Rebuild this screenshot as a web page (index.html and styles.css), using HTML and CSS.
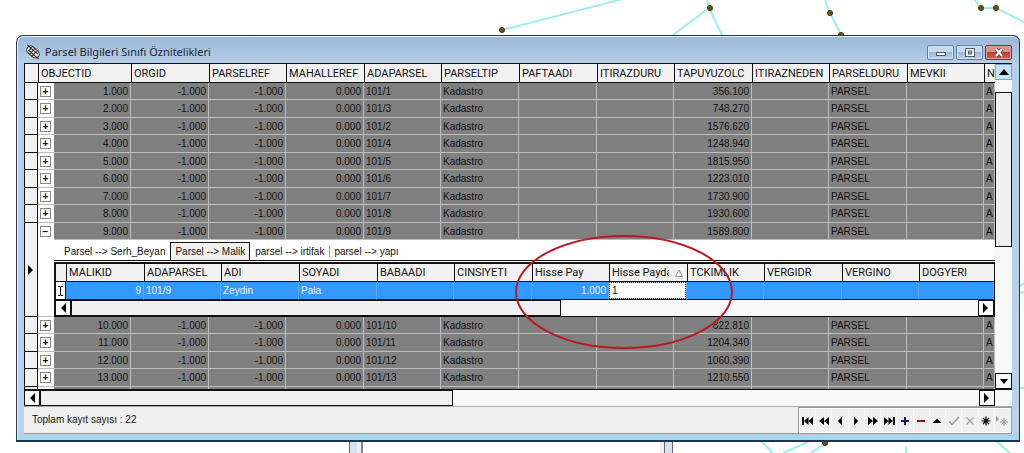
FILE: index.html
```html
<!DOCTYPE html>
<html lang="tr">
<head>
<meta charset="utf-8">
<title>Parsel Bilgileri Sınıfı Öznitelikleri</title>
<link rel="stylesheet" href="styles.css">
</head>
<body>
<svg class="map" width="1024" height="453" viewBox="0 0 1024 453" aria-hidden="true">
  <g fill="none" stroke="#9deeea" stroke-width="2">
    <path d="M502 30 623-1M707 0l2 8-36 27M709 8l13 27M825 0l5 13 11 22M974-1l7 9h15l28 14M761 441l12 12M783 453l25-11M811 453l14-9M906 447v6M996 441l14 12M1020 286l4-3M1020 293l4-1M1020 388h4"/>
  </g>
  <g fill="#74501c" stroke="#3a2a10">
    <circle cx="502" cy="30" r="2.5"/><circle cx="710" cy="8" r="2.5"/><circle cx="830" cy="13" r="2.5"/><circle cx="841" cy="35" r="2.5"/><circle cx="981" cy="8" r="2.5"/><circle cx="996" cy="8" r="2.5"/><circle cx="825" cy="443" r="2.5"/>
  </g>
  <path fill="#d5e3ef" d="M350 440h7v13h-7zM665 440h7v13h-7z"/>
  <path fill="#eee" d="M357 440h4v13h-4zM660 440h4v13h-4z"/>
  <path stroke="#667" d="M349.500 440v13M664.500 440v13M672.500 440v13"/>
  <path stroke="#888" stroke-width="2" d="M362 440v13"/>
</svg>

<main class="window">
  <header class="titlebar">
    <svg class="app-icon" width="16" height="16" viewBox="0 0 16 16" aria-hidden="true"><g transform="rotate(42 8 8)"><rect x="1" y="4" width="14" height="8" rx="4" fill="#f4f4f4" stroke="#222"/><path d="M-1 6.500h14M3 9.500h14M4 4v5M7 4v8M10 5v7" fill="none" stroke="#222"/></g></svg>
    <h1>Parsel Bilgileri Sınıfı Öznitelikleri</h1>
    <div class="controls">
      <button class="control" aria-label="Simge durumuna küçült"><svg width="12" height="9" viewBox="0 0 12 9"><rect x="1.500" y="4.500" width="9" height="3" fill="#fff" stroke="#555d70"/></svg></button>
      <button class="control" aria-label="Ekranı kapla"><svg width="12" height="9" viewBox="0 0 12 9"><rect x="1.500" y=".5" width="9" height="8" fill="#fff" stroke="#555d70"/><rect x="4.500" y="3" width="3" height="3" fill="#9db6d3" stroke="#555d70"/></svg></button>
      <button class="control close" aria-label="Kapat"><svg width="12" height="9" viewBox="0 0 12 9"><path d="M3 1l6 7M9 1L3 8" stroke="#70404a" stroke-width="4"/><path d="M3 1l6 7M9 1L3 8" stroke="#fff" stroke-width="2"/></svg></button>
    </div>
  </header>

  <div class="content">
    <div class="grid-area">
      <table class="grid">
        <colgroup><col class="w-mark"><col class="w-expand"><col class="w-id"><col class="w-a"><col class="w-b"><col class="w-a"><col class="w-b"><col class="w-a"><col class="w-a"><col class="w-b"><col class="w-a"><col class="w-b"><col class="w-a"><col class="w-b"><col></colgroup>
        <thead><tr><th class="mark"></th><th colspan="2">OBJECTID</th><th>ORGID</th><th>PARSELREF</th><th>MAHALLEREF</th><th>ADAPARSEL</th><th>PARSELTIP</th><th>PAFTAADI</th><th>ITIRAZDURU</th><th>TAPUYUZOLC</th><th>ITIRAZNEDEN</th><th>PARSELDURU</th><th>MEVKII</th><th>N</th></tr></thead>
        <tbody>
          <tr><td class="mark"></td><td class="expand"><button aria-label="Genişlet">+</button></td><td class="num">1.000</td><td class="num">-1.000</td><td class="num">-1.000</td><td class="num">0.000</td><td>101/1</td><td>Kadastro</td><td></td><td></td><td class="num">356.100</td><td></td><td>PARSEL</td><td></td><td>A</td></tr>
          <tr><td class="mark"></td><td class="expand"><button aria-label="Genişlet">+</button></td><td class="num">2.000</td><td class="num">-1.000</td><td class="num">-1.000</td><td class="num">0.000</td><td>101/3</td><td>Kadastro</td><td></td><td></td><td class="num">748.270</td><td></td><td>PARSEL</td><td></td><td>A</td></tr>
          <tr><td class="mark"></td><td class="expand"><button aria-label="Genişlet">+</button></td><td class="num">3.000</td><td class="num">-1.000</td><td class="num">-1.000</td><td class="num">0.000</td><td>101/2</td><td>Kadastro</td><td></td><td></td><td class="num">1576.620</td><td></td><td>PARSEL</td><td></td><td>A</td></tr>
          <tr><td class="mark"></td><td class="expand"><button aria-label="Genişlet">+</button></td><td class="num">4.000</td><td class="num">-1.000</td><td class="num">-1.000</td><td class="num">0.000</td><td>101/4</td><td>Kadastro</td><td></td><td></td><td class="num">1248.940</td><td></td><td>PARSEL</td><td></td><td>A</td></tr>
          <tr><td class="mark"></td><td class="expand"><button aria-label="Genişlet">+</button></td><td class="num">5.000</td><td class="num">-1.000</td><td class="num">-1.000</td><td class="num">0.000</td><td>101/5</td><td>Kadastro</td><td></td><td></td><td class="num">1815.950</td><td></td><td>PARSEL</td><td></td><td>A</td></tr>
          <tr><td class="mark"></td><td class="expand"><button aria-label="Genişlet">+</button></td><td class="num">6.000</td><td class="num">-1.000</td><td class="num">-1.000</td><td class="num">0.000</td><td>101/6</td><td>Kadastro</td><td></td><td></td><td class="num">1223.010</td><td></td><td>PARSEL</td><td></td><td>A</td></tr>
          <tr><td class="mark"></td><td class="expand"><button aria-label="Genişlet">+</button></td><td class="num">7.000</td><td class="num">-1.000</td><td class="num">-1.000</td><td class="num">0.000</td><td>101/7</td><td>Kadastro</td><td></td><td></td><td class="num">1730.900</td><td></td><td>PARSEL</td><td></td><td>A</td></tr>
          <tr><td class="mark"></td><td class="expand"><button aria-label="Genişlet">+</button></td><td class="num">8.000</td><td class="num">-1.000</td><td class="num">-1.000</td><td class="num">0.000</td><td>101/8</td><td>Kadastro</td><td></td><td></td><td class="num">1930.600</td><td></td><td>PARSEL</td><td></td><td>A</td></tr>
          <tr><td class="mark" rowspan="2"><svg width="6" height="10" viewBox="0 0 6 10"><path d="M0 0v10l5-5z"/></svg></td><td class="expand" rowspan="2"><button aria-label="Daralt">−</button></td><td class="num">9.000</td><td class="num">-1.000</td><td class="num">-1.000</td><td class="num">0.000</td><td>101/9</td><td>Kadastro</td><td></td><td></td><td class="num">1589.800</td><td></td><td>PARSEL</td><td></td><td>A</td></tr>
          <tr class="detail-row"><td class="detail" colspan="13">
            <nav class="tabs"><button>Parsel --&gt; Serh_Beyan</button><button class="active">Parsel --&gt; Malik</button><button>parsel --&gt; irtifak</button><button class="divided">parsel --&gt; yapı</button></nav>
            <div class="subgrid">
              <table class="grid">
                <colgroup><col class="w-submark"><col class="w-a"><col class="w-b"><col class="w-a"><col class="w-a"><col class="w-b"><col class="w-a"><col class="w-b"><col class="w-a"><col class="w-b"><col class="w-a"><col class="w-b"><col></colgroup>
                <thead><tr><th class="mark"></th><th>MALIKID</th><th>ADAPARSEL</th><th>ADI</th><th>SOYADI</th><th>BABAADI</th><th>CINSIYETI</th><th>Hisse Pay</th><th><span class="sorted"><span class="label">Hisse Payda</span><svg width="8" height="8" viewBox="0 0 8 8"><path d="M4 1L.5 7.500h7z" fill="none" stroke="#999"/></svg></span></th><th>TCKIMLIK</th><th>VERGIDR</th><th>VERGINO</th><th>DOGYERI</th></tr></thead>
                <tbody><tr class="selected"><td class="mark"><svg width="7" height="10" viewBox="0 0 7 10"><path d="M1 .5h2l.5.500.5-.500h2M3.500 1v8M1 9.500h2l.5-.500.5.500h2" fill="none" stroke="#000"/></svg></td><td class="num">9</td><td>101/9</td><td>Zeydin</td><td>Pala</td><td></td><td></td><td class="num">1.000</td><td class="edit"><input value="1" aria-label="Hisse Payda"></td><td></td><td></td><td></td><td></td></tr></tbody>
              </table>
              <div class="hscroll">
                <button class="arrow" aria-label="Sola kaydır"><svg width="6" height="10" viewBox="0 0 6 10"><path d="M6 0v10L1 5z"/></svg></button>
                <div class="track"><div class="thumb detail-thumb"></div></div>
                <button class="arrow" aria-label="Sağa kaydır"><svg width="6" height="10" viewBox="0 0 6 10"><path d="M0 0v10l5-5z"/></svg></button>
              </div>
            </div>
          </td></tr>
          <tr><td class="mark"></td><td class="expand"><button aria-label="Genişlet">+</button></td><td class="num">10.000</td><td class="num">-1.000</td><td class="num">-1.000</td><td class="num">0.000</td><td>101/10</td><td>Kadastro</td><td></td><td></td><td class="num">822.810</td><td></td><td>PARSEL</td><td></td><td>A</td></tr>
          <tr><td class="mark"></td><td class="expand"><button aria-label="Genişlet">+</button></td><td class="num">11.000</td><td class="num">-1.000</td><td class="num">-1.000</td><td class="num">0.000</td><td>101/11</td><td>Kadastro</td><td></td><td></td><td class="num">1204.340</td><td></td><td>PARSEL</td><td></td><td>A</td></tr>
          <tr><td class="mark"></td><td class="expand"><button aria-label="Genişlet">+</button></td><td class="num">12.000</td><td class="num">-1.000</td><td class="num">-1.000</td><td class="num">0.000</td><td>101/12</td><td>Kadastro</td><td></td><td></td><td class="num">1060.390</td><td></td><td>PARSEL</td><td></td><td>A</td></tr>
          <tr><td class="mark"></td><td class="expand"><button aria-label="Genişlet">+</button></td><td class="num">13.000</td><td class="num">-1.000</td><td class="num">-1.000</td><td class="num">0.000</td><td>101/13</td><td>Kadastro</td><td></td><td></td><td class="num">1210.550</td><td></td><td>PARSEL</td><td></td><td>A</td></tr>
          <tr class="partial"><td class="mark"></td><td class="expand"></td><td></td><td></td><td></td><td></td><td></td><td></td><td></td><td></td><td></td><td></td><td></td><td></td><td></td></tr>
        </tbody>
      </table>
      <div class="vscroll">
        <button class="arrow hot" aria-label="Yukarı kaydır"><svg width="10" height="6" viewBox="0 0 10 6"><path d="M0 6h10L5 0z"/></svg></button>
        <div class="track"><div class="thumb"></div></div>
        <button class="arrow" aria-label="Aşağı kaydır"><svg width="8" height="5" viewBox="0 0 8 5"><path d="M0 0h8L4 5z"/></svg></button>
      </div>
    </div>
    <div class="hscroll main-scroll">
      <button class="arrow" aria-label="Sola kaydır"><svg width="6" height="10" viewBox="0 0 6 10"><path d="M6 0v10L1 5z"/></svg></button>
      <div class="track"><div class="thumb main-thumb"></div></div>
      <button class="arrow" aria-label="Sağa kaydır"><svg width="6" height="10" viewBox="0 0 6 10"><path d="M0 0v10l5-5z"/></svg></button>
    </div>
    <footer class="status">
      <p>Toplam kayıt sayısı : 22</p>
      <div class="navigator">
        <button aria-label="İlk kayıt"><svg width="12" height="10" viewBox="0 0 12 10"><path d="M0 1h2v8H0zM6.500 1v8L2 5zM11 1v8L6.500 5z"/></svg></button>
        <button aria-label="Önceki sayfa"><svg width="12" height="10" viewBox="0 0 12 10"><path d="M6 1v8L1 5zM11 1v8L6 5z"/></svg></button>
        <button aria-label="Önceki kayıt"><svg width="12" height="10" viewBox="0 0 12 10"><path d="M8 .5v9L4 5z"/></svg></button>
        <button aria-label="Sonraki kayıt"><svg width="12" height="10" viewBox="0 0 12 10"><path d="M4 .5v9L8 5z"/></svg></button>
        <button aria-label="Sonraki sayfa"><svg width="12" height="10" viewBox="0 0 12 10"><path d="M1 1v8l5-4zM6 1v8l5-4z"/></svg></button>
        <button aria-label="Son kayıt"><svg width="12" height="10" viewBox="0 0 12 10"><path d="M1 1v8l4.500-4zM5.500 1v8L10 5zM10 1h2v8h-2z"/></svg></button>
        <button aria-label="Ekle"><svg width="12" height="10" viewBox="0 0 12 10"><path d="M2 5h8M6 1v8" stroke="#10107c" stroke-width="2"/></svg></button>
        <button aria-label="Sil"><svg width="12" height="10" viewBox="0 0 12 10"><path d="M2 5h8" stroke="#981414" stroke-width="2"/></svg></button>
        <button aria-label="Düzenle"><svg width="12" height="10" viewBox="0 0 12 10"><path d="M1.500 7h9L6 2.500z"/></svg></button>
        <button aria-label="Kaydet"><svg width="12" height="10" viewBox="0 0 12 10"><path d="M1 5.500L4 8.500 11 1" fill="none" stroke="#999" stroke-width="1.500"/></svg></button>
        <button aria-label="Vazgeç"><svg width="12" height="10" viewBox="0 0 12 10"><path d="M2.500 1.500l7 7M9.500 1.500l-7 7" stroke="#a0a0a0" stroke-width="1.300"/></svg></button>
        <button aria-label="Yer imi"><svg width="12" height="10" viewBox="0 0 12 10"><path d="M6 .5v9M1.500 5h9M3 2l6 6M9 2L3 8" stroke="#000" stroke-width="1.200"/></svg></button>
        <button aria-label="Yer imine git"><svg width="12" height="10" viewBox="0 0 12 10"><path d="M0 0v6l3-3z" fill="#999"/><path d="M8 2v8M4 6h8M5.500 3.500l5 5M10.500 3.500l-5 5" stroke="#999"/></svg></button>
      </div>
    </footer>
  </div>
  <svg class="highlight" width="218" height="116" viewBox="0 0 218 116" aria-hidden="true"><ellipse cx="109" cy="58" rx="108" ry="56" fill="none" stroke="#b81c24" stroke-width="2"/></svg>
</main>
</body>
</html>
```
FILE: styles.css
```css
* { box-sizing: border-box; }

body {
  margin: 0;
  padding: 35px 4px 12px 16px;
  background: #fff;
  color: #111;
  font: 10px/16px "Liberation Sans", sans-serif;
}

button {
  display: flex;
  align-items: center;
  justify-content: center;
  margin: 0;
  padding: 0;
  border: 0;
  background: none;
  color: inherit;
  font: inherit;
}

svg { display: block; flex: none; }

.map { position: absolute; top: 0; left: 0; }

.window {
  position: relative;
  padding: 0 7px 6px;
  border: 1px solid #2b3a4a;
  border-bottom: 2px solid #23304e;
  border-radius: 7px 7px 0 0;
  background: linear-gradient(#9bb7d6, #b5cfea 28px, #bad2eb 395px, #bccbe3 399px, #9ddcf0 401px);
  box-shadow: inset 1px 1px #e6f2fb;
}

.titlebar {
  display: flex;
  align-items: center;
  gap: 4px;
  height: 27px;
  padding: 5px 0 0 1px;
}

.titlebar h1 {
  flex: 1;
  margin: 0;
  color: #1a2430;
  font: 11px/16px "Noto Sans", sans-serif;
}

.controls { display: flex; gap: 2px; }

.control {
  width: 27px;
  height: 15px;
  border: 1px solid #5e7ea6;
  border-radius: 2px;
  background: linear-gradient(#c6d9ee 45%, #9fbbdb 50%, #b7d0ea);
  box-shadow: inset 0 0 0 1px #d5e5f5;
}

.close {
  border-color: #7a3030;
  background: linear-gradient(#dc9288 45%, #bc3f30 50%, #cf6450);
  box-shadow: inset 0 0 0 1px #dfa198;
}

.content { border-top: 1px solid #111; background: #f0f0f0; }

.grid-area { display: flex; }

.grid {
  flex: 1;
  width: 100%;
  min-width: 0;
  border-collapse: separate;
  border-spacing: 0;
  table-layout: fixed;
}

.w-mark { width: 14px; }
.w-expand { width: 16px; }
.w-id { width: 77px; }
.w-a { width: 78px; }
.w-b { width: 77px; }
.w-submark { width: 11px; }

.grid th,
.grid td {
  height: 17px;
  padding: 0 2px;
  overflow: hidden;
  line-height: 15px;
  text-align: left;
  white-space: nowrap;
}

.grid th {
  height: 19px;
  border-bottom: 1px solid #111;
  border-left: 1px solid #111;
  background: #f1f1f1;
  font: 11px/15px Roboto, sans-serif;
}

.grid td {
  border-right: 1px solid #bdbdbd;
  border-bottom: 1px solid #bdbdbd;
  background: #808080;
}

.grid tr:nth-child(even) td { height: 18px; }

.grid .num { text-align: right; }

.grid .mark {
  border-right: 1px solid #111;
  border-bottom: 1px solid #111;
  border-left: 1px solid #111;
  background: #f0f0f0;
}

.grid th.mark { border-right: 0; }
.grid td.mark svg { margin: auto; }

.grid .expand {
  padding: 3px 0 0 2px;
  border-right: 0;
  background: #fff;
  vertical-align: top;
}

.expand button {
  width: 11px;
  height: 11px;
  border: 1px solid #888;
  font: bold 10px/9px "Liberation Sans", sans-serif;
}

.grid .partial td { height: 2px; padding: 0; border-bottom: 0; }

.grid .detail {
  padding: 2px 0 0;
  border: 0;
  background: #fff;
}

.tabs {
  display: flex;
  height: 19px;
  border-bottom: 1px solid #111;
  padding-left: 5px;
}

.tabs button { padding: 0 5px; }

.tabs .active {
  border: 1px solid #111;
  border-bottom: 0;
  background: #f0f0f0;
  padding: 0 4px;
}

.tabs .divided { background: linear-gradient(#999, #999) left center / 1px 12px no-repeat; }

.subgrid {
  margin-top: 1px;
  border: 1px solid #111;
  border-top-width: 2px;
}

.subgrid .grid th { height: 18px; }

.grid .selected td {
  height: 18px;
  border-right-color: #62a8f5;
  border-bottom: 1px solid #111;
  background: #3399fe;
  color: #e8f3ff;
}

.grid .selected .mark { padding: 0; border-right-color: #111; background: #fff; }

.grid .selected .edit { padding: 0; background: #fff; }

.edit input {
  display: block;
  width: 100%;
  height: 17px;
  padding: 0 2px;
  border: 1px dotted #111;
  background: #fff;
  color: #111;
  font: inherit;
}

.sorted { display: flex; align-items: center; gap: 6px; }
.sorted .label { width: 57px; overflow: hidden; }

.hscroll { display: flex; height: 16px; background: #f8f8f8; }

.arrow {
  flex: none;
  width: 16px;
  height: 16px;
  border: 1px solid #111;
  background: #f8f8f8;
}

.track { flex: 1; background: #f8f8f8; }

.hscroll .thumb {
  height: 100%;
  border: 1px solid #111;
  background: #f0f0f0;
}

.detail-thumb { width: 54%; }
.main-thumb { width: 44%; }

.main-scroll {
  height: 18px;
  padding-right: 17px;
  border-top: 1px solid #111;
  border-bottom: 1px solid #aaa;
}

.vscroll {
  display: flex;
  flex-direction: column;
  flex: none;
  width: 17px;
  background: #f8f8f8;
}

.vscroll .arrow { width: 17px; }
.vscroll .hot { border-color: #7da5cf; background: #c5e2f8; }

.vscroll .thumb {
  height: 55%;
  border: 1px solid #111;
  background: #f0f0f0;
}

.vscroll .track { padding-top: 12px; }

.status {
  display: flex;
  align-items: center;
  justify-content: space-between;
  border-bottom: 1px solid #999;
}

.status p { margin: 0; padding-left: 8px; }

.navigator {
  display: flex;
  gap: 1px;
  width: 214px;
  padding: 1px;
  border: 1px solid #999;
  border-bottom: 0;
  background: #f9f9f9;
}

.navigator button { flex: 1; height: 23px; background: #f0f0f0; }

.highlight { position: absolute; top: 198px; left: 498px; }
```
